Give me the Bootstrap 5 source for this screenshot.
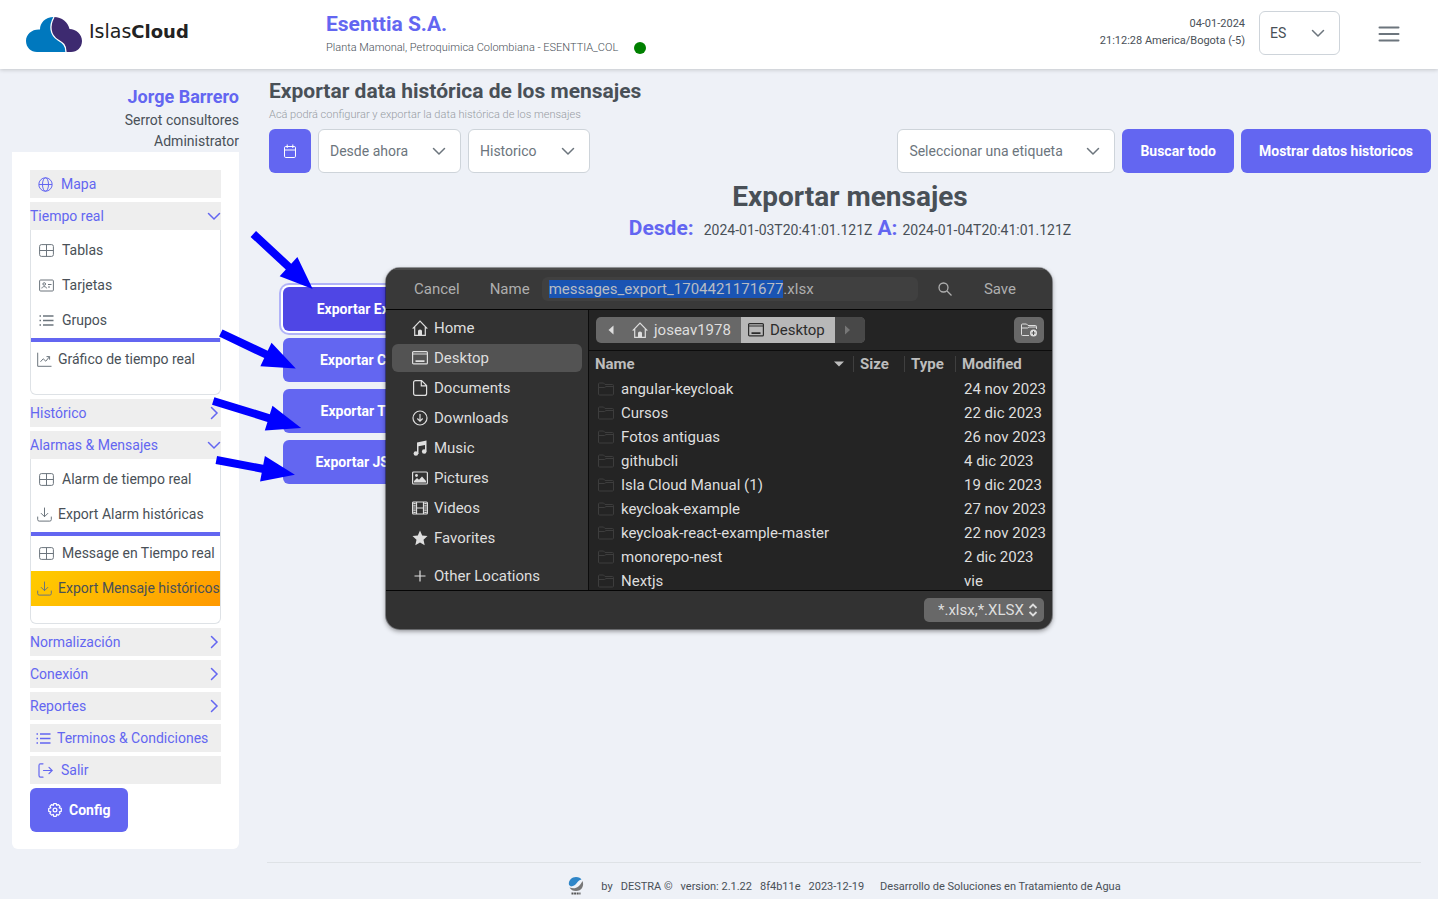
<!DOCTYPE html>
<html lang="es">
<head>
<meta charset="utf-8">
<meta name="viewport" content="width=device-width, initial-scale=1">
<title>IslasCloud - Exportar mensajes</title>
<link href="https://cdn.jsdelivr.net/npm/bootstrap@5.3.0/dist/css/bootstrap.min.css" rel="stylesheet">
<style>
:root{--accent:#6366f1;--ink:#495057;--soft:#6c757d}
body{font-family:Roboto,"Liberation Sans",sans-serif;font-size:14px;line-height:21px;color:var(--ink);background:#eef1f7;min-height:100vh}
svg{display:block;flex:none;fill:none;stroke:currentColor}
svg.solid{fill:currentColor;stroke:none}
a{color:inherit;text-decoration:none}
.accent{color:var(--accent)}
.topbar{min-height:69px;background:#fff;box-shadow:0 1px 4px rgba(0,0,0,.18);z-index:2;padding:0 38px 2px 24px}
.brand{width:302px;color:#222;font-family:"DejaVu Sans",sans-serif;font-size:19px;line-height:24px;gap:5px;margin-top:4px}
.brand strong{font-size:18px}
.burger{color:var(--soft);margin-left:38px}
.heading-md{font-size:21px;line-height:26px;font-weight:700}
.tiny{font-size:11px;line-height:17px}
.place{margin-top:2px}
.status-dot{width:12px;height:12px;background:green}
.btn{--bs-btn-font-size:14px;--bs-btn-line-height:21px;--bs-btn-border-radius:6px;--bs-btn-font-weight:700;--bs-btn-border-width:0;height:44px}
.btn-accent{--bs-btn-color:#fff;--bs-btn-bg:var(--accent);--bs-btn-hover-bg:#4f46e5;--bs-btn-hover-color:#fff;--bs-btn-padding-x:18px}
.btn-current{--bs-btn-bg:#4f46e5;box-shadow:0 0 0 2px #fff,0 0 0 4px #b1b3f8}
.btn-square{--bs-btn-padding-x:14px}
.form-select{height:44px;font-size:14px;line-height:21px;color:var(--soft);border-color:#ced4da;border-radius:6px;padding:10px 36px 10px 11px;background-color:#fff;background-position:right 14px center;background-size:14px 14px;--bs-form-select-bg-img:url("data:image/svg+xml,%3csvg xmlns='http://www.w3.org/2000/svg' viewBox='0 0 14 14'%3e%3cpath fill='none' stroke='%236c757d' stroke-width='1.5' stroke-linecap='round' stroke-linejoin='round' d='M1.5 4.5 7 10l5.500-5.500'/%3e%3c/svg%3e")}
.lang{width:81px;color:var(--ink);margin-left:14px;padding-left:10px}
.sel-time{width:143px}.sel-kind{width:122px}.sel-tag{width:218px}
.gap-7{gap:7px}
.side{width:239px;padding:16px 0 0 12px}
.side-panel{background:#fff;padding:18px 18px 17px;border-radius:0 0 6px 6px}
.user-name{font-size:18px;line-height:23px;font-weight:700;margin-bottom:2px}
.menu{gap:4px}
.menu-head{height:28px;background:#eee;color:var(--accent);border:0;padding:0;text-align:left}
.menu-icon{padding-left:8px;gap:8px}
.menu-tight{padding-left:6px;gap:6px}
.submenu{border:1px solid #dee2e6;border-top:0;border-radius:0 0 6px 6px;margin-top:-4px;padding:3px 0 17px}
.submenu a{height:35px;padding-left:8px;gap:8px;white-space:nowrap}
.submenu a.menu-tight{padding-left:6px;gap:6px}
.submenu svg{color:var(--soft)}
.submenu .current{background:linear-gradient(135deg,#fc0,#f90)}
.rule{height:4px;background:var(--accent)}
.content{padding:9px 7px 0 30px}
.subtitle{color:#979ca3;margin-top:2px}
.filters{margin-top:6px}
.big-title{font-size:28px;line-height:34px;font-weight:700;margin-top:7px}
.range{margin-top:1px}
.range-from{margin:0 5px 0 10px}
.range-to{margin-left:5px}
.exports{width:158px;margin:46px 0 0 14px;gap:7px}
.exports .btn{padding-left:0;padding-right:0}
.foot{border-top:1px solid #dee2e6;margin:0 10px 0 -2px;padding:14px 0 4px;gap:8px}
.arrows{position:absolute;left:0;top:0;z-index:6;pointer-events:none;color:#00f}
.dialog-layer{position:absolute;left:0;right:0;top:268px;z-index:5}
.file-dialog{width:666px;border-radius:14px;background:#323232;color:#dedede;font-size:15px;line-height:20px;box-shadow:0 0 0 1px rgba(0,0,0,.35),0 2px 5px rgba(0,0,0,.45);overflow:hidden}
.file-dialog button,.file-dialog .places a{color:inherit}
.fd-head{height:42px;background:#393939;border-top:2px solid #4c4c4c;border-bottom:1px solid #050505;color:#aeaeae;padding:0 36px 2px 28px}
.fd-plain{background:none;border:0;padding:0}
.fd-head label{margin:0 12px 0 30px}
.fd-name{width:376px;height:24px;border:0;border-radius:6px;background:#404040;color:#aeaeae;padding:0 7px;outline:0}
.fd-name::selection{background:#1a54b3;color:#b8bcc4}
.fd-search{margin:0 auto 0 20px}
.fd-body{height:281px;border-bottom:1px solid #050505;overflow:hidden}
.places{width:203px;border-right:1px solid #0c0c0c;padding:4px 6px;gap:2px}
.places a{flex:none;height:28px;padding-left:20px;gap:6px;border-radius:6px}
.places .current{background:#535353}
.files{background:#242424}
.pathbar{height:41px;border-bottom:1px solid #0c0c0c;padding:0 8px 0 7px}
.crumbs{height:26px;border-radius:5px;background:#686868;overflow:hidden}
.crumbs button{height:26px;border:0;background:none;padding:0 10px 0 7px;gap:6px}
.crumbs .back{padding:0 8px 0 9px}
.crumbs .here{background:#b8b8b8;color:#2c2c2c}
.crumbs .next{background:#484848;color:#777;width:30px}
.new-folder{width:30px;height:26px;border:0;border-radius:5px;background:#686868;padding:0 7px}
.file-table{table-layout:fixed;width:100%;border-collapse:collapse}
.file-table th{height:26px;padding:0;color:#bdbdbd}
.file-table th>div{padding:0 8px 0 6px;height:16px}
.file-table th+th>div{border-left:1px solid #3f3f3f}
.file-table td{height:24px;padding:0 0 0 9px;white-space:nowrap}
.file-table td svg{color:#3d3d3d}
.c-name{width:264px}.c-small{width:51px}
.fd-foot{height:38px;padding:0 8px 0 0}
.fd-filter{height:24px;width:120px;border:0;border-radius:5px;color:#dedede;font-size:15px;line-height:20px;padding:0 0 0 14px;background-color:#686868;background-position:right 4px center;background-size:14px 16px;--bs-form-select-bg-img:url("data:image/svg+xml,%3csvg xmlns='http://www.w3.org/2000/svg' viewBox='0 0 14 16'%3e%3cpath fill='none' stroke='%23dedede' stroke-width='1.800' d='M3.500 6 7 2.500 10.500 6M3.500 10 7 13.500l3.500-3.500'/%3e%3c/svg%3e")}
</style>
</head>
<body class="position-relative d-flex flex-column">
<svg width="0" height="0" class="position-absolute" aria-hidden="true">
  <symbol id="globe" viewBox="0 0 15 15"><circle cx="7.500" cy="7.500" r="6.700"/><ellipse cx="7.500" cy="7.500" rx="3" ry="6.700"/><path d="M1 7.500h13"/></symbol>
  <symbol id="grid" viewBox="0 0 15 15"><rect x=".6" y="1.600" width="13.800" height="11.800" rx="1.800"/><path d="M.6 7.500h13.800M7.500 1.600v11.800"/></symbol>
  <symbol id="idcard" viewBox="0 0 15 15"><rect x=".6" y="2" width="13.800" height="11" rx="1"/><circle cx="5.200" cy="6" r="1.300"/><path d="M2.800 10.400c.3-2.400 4.500-2.400 4.800 0M9 6.500h3.500M9 9h2"/></symbol>
  <symbol id="list" viewBox="0 0 15 15"><path d="M4 3h10.500M4 7.500h10.500M4 12h10.500M.5 3H2M.5 7.500H2M.5 12H2" stroke-width="1.300"/></symbol>
  <symbol id="chart" viewBox="0 0 15 15"><path d="M.7.700v13.600h13.800M3.500 9.800l2.700-3 2.600 2.400 3.700-4.500M9.500 4.600h3.100v3.100"/></symbol>
  <symbol id="download" viewBox="0 0 15 15"><path d="M7.500 1v8.500M4.200 6.400l3.300 3.300 3.300-3.300M.7 10v2.600q0 1.500 1.500 1.500h10.600q1.500 0 1.500-1.500V10" stroke-linecap="round"/></symbol>
  <symbol id="exit" viewBox="0 0 15 15"><path d="M5 .8H2.500Q1 .8 1 2.500v10Q1 14.200 2.500 14.200H5M5.500 7.500h8.700M11 4.300l3.200 3.200-3.200 3.200" stroke-width="1.200" stroke-linecap="round"/></symbol>
  <symbol id="down" viewBox="0 0 14 14"><path d="M1.500 4.500 7 10l5.500-5.500" stroke-width="1.500" stroke-linecap="round"/></symbol>
  <symbol id="right" viewBox="0 0 14 14"><path d="M4.500 1.500 10 7l-5.500 5.500" stroke-width="1.500" stroke-linecap="round"/></symbol>
  <symbol id="folder" viewBox="0 0 16 14"><path d="M.5 12V2q0-1 1-1h4l1.500 1.500h7.500q1 0 1 1V12q0 1-1 1h-13q-1 0-1-1zM.5 5.500h6L8 4.500h7.500"/></symbol>
  <symbol id="home" viewBox="0 0 16 16"><path d="M.7 8.700 8 1.200l7.300 7.500M2.700 7v8.300h10.600V7" stroke-width="1.200"/><path d="M6 15.500V11q0-1.500 2-1.500t2 1.500v4.500z" fill="currentColor" stroke="none"/></symbol>
  <symbol id="desktop" viewBox="0 0 16 16"><rect x=".6" y="1.600" width="14.800" height="12.300" rx="1" stroke-width="1.200"/><path d="M1 4h14" /><path d="M3.500 11.200h9" stroke-width="1.800"/></symbol>
</svg>

<header class="topbar d-flex align-items-center position-relative">
  <div class="d-flex align-items-start w-100">
    <a href="#" class="brand d-flex align-items-start">
      <svg class="solid" width="60" height="38" viewBox="0 0 60 38"><path d="M30 2C21 2 16 8 16 14.500 8 14 2 19 2 26c0 6.500 5 11 11 11h29c0-7-3-9-8-12-8-5-9-14-4-23z" fill="#0078be"/><path d="M30 2c8 0 14 5 15.500 12C52 14 58 19 58 26c0 6.500-5 11-11 11h-5c0-7-3-9-8-12-8-5-9-14-4-23z" fill="#3d2a70"/><path d="M30 2c-5 9-4 18 4 23 5 3 8 5 8 12" fill="none" stroke="#fff" stroke-width="1.300"/></svg>
      <span class="mt-1">Islas<strong>Cloud</strong></span>
    </a>
    <div class="flex-grow-1">
      <div class="heading-md accent">Esenttia S.A.</div>
      <div class="place d-flex align-items-center tiny fw-light">Planta Mamonal, Petroquimica Colombiana - ESENTTIA_COL<span class="status-dot rounded-circle ms-3"></span></div>
    </div>
    <div class="tiny text-end mt-1">04-01-2024<br>21:12:28 America/Bogota (-5)</div>
    <select class="form-select lang" aria-label="Idioma"><option>ES</option></select>
    <button class="fd-plain burger" type="button" aria-label="Menú"><svg width="22" height="44" viewBox="0 0 22 44" stroke-width="2" stroke-linecap="round"><path d="M1.500 16.500h19M1.500 23h19M1.500 29.500h19"/></svg></button>
  </div>
</header>

<div class="d-flex flex-grow-1">
  <aside class="side flex-shrink-0">
    <div class="text-end">
      <div class="user-name accent">Jorge Barrero</div>
      <div>Serrot consultores</div>
      <div>Administrator</div>
    </div>
    <div class="side-panel">
      <nav class="menu d-flex flex-column">
        <a href="#" class="menu-head menu-icon d-flex align-items-center"><svg width="15" height="15"><use href="#globe"/></svg>Mapa</a>
        <button class="menu-head d-flex align-items-center justify-content-between" type="button">Tiempo real<svg width="14" height="14"><use href="#down"/></svg></button>
        <div class="submenu">
          <a href="#" class="d-flex align-items-center"><svg width="15" height="15"><use href="#grid"/></svg>Tablas</a>
          <a href="#" class="d-flex align-items-center"><svg width="15" height="15"><use href="#idcard"/></svg>Tarjetas</a>
          <a href="#" class="d-flex align-items-center"><svg width="15" height="15"><use href="#list"/></svg>Grupos</a>
          <div class="rule"></div>
          <a href="#" class="menu-tight d-flex align-items-center"><svg width="15" height="15"><use href="#chart"/></svg>Gráfico de tiempo real</a>
        </div>
        <button class="menu-head d-flex align-items-center justify-content-between" type="button">Histórico<svg width="14" height="14"><use href="#right"/></svg></button>
        <button class="menu-head d-flex align-items-center justify-content-between" type="button">Alarmas &amp; Mensajes<svg width="14" height="14"><use href="#down"/></svg></button>
        <div class="submenu">
          <a href="#" class="d-flex align-items-center"><svg width="15" height="15"><use href="#grid"/></svg>Alarm de tiempo real</a>
          <a href="#" class="menu-tight d-flex align-items-center"><svg width="15" height="15"><use href="#download"/></svg>Export Alarm históricas</a>
          <div class="rule"></div>
          <a href="#" class="d-flex align-items-center"><svg width="15" height="15"><use href="#grid"/></svg>Message en Tiempo real</a>
          <a href="#" class="menu-tight current d-flex align-items-center"><svg width="15" height="15"><use href="#download"/></svg>Export Mensaje históricos</a>
        </div>
        <button class="menu-head d-flex align-items-center justify-content-between" type="button">Normalización<svg width="14" height="14"><use href="#right"/></svg></button>
        <button class="menu-head d-flex align-items-center justify-content-between" type="button">Conexión<svg width="14" height="14"><use href="#right"/></svg></button>
        <button class="menu-head d-flex align-items-center justify-content-between" type="button">Reportes<svg width="14" height="14"><use href="#right"/></svg></button>
        <a href="#" class="menu-head menu-tight d-flex align-items-center"><svg width="15" height="15"><use href="#list"/></svg>Terminos &amp; Condiciones</a>
        <a href="#" class="menu-head menu-icon d-flex align-items-center"><svg width="15" height="15"><use href="#exit"/></svg>Salir</a>
        <button class="btn btn-accent d-flex align-items-center align-self-start gap-7" type="button"><svg width="14" height="14" viewBox="0 0 14 14" stroke-width="1.200" stroke-linejoin="round"><circle cx="7" cy="7" r="1.900"/><path d="M5.700.7h2.600l.4 1.700 1.500-.9 1.900 1.900-.9 1.400 2.100.6v2.900l-2 .5.800 1.600-1.900 1.800-1.500-.9-.5 2H5.700l-.4-2-1.600.9-1.800-1.800.9-1.600-2.100-.5V5.500l2.100-.6-.9-1.500 1.800-1.900 1.600.9z"/></svg>Config</button>
      </nav>
    </div>
  </aside>

  <main class="content flex-grow-1 d-flex flex-column">
    <h1 class="heading-md mb-0">Exportar data histórica de los mensajes</h1>
    <div class="tiny fw-light subtitle">Acá podrá configurar y exportar la data histórica de los mensajes</div>
    <div class="filters d-flex gap-7">
      <button class="btn btn-accent btn-square" type="button" aria-label="Calendario"><svg width="14" height="14" viewBox="0 0 14 14"><rect x="1.500" y="2.500" width="11" height="11" rx="1.300"/><path d="M1.500 6h11M4.200.5v3.500M9.800.5v3.500"/></svg></button>
      <select class="form-select sel-time" aria-label="Desde"><option>Desde ahora</option></select>
      <select class="form-select sel-kind" aria-label="Tipo de datos"><option>Historico</option></select>
      <select class="form-select sel-tag ms-auto" aria-label="Etiqueta"><option>Seleccionar una etiqueta</option></select>
      <button class="btn btn-accent" type="button">Buscar todo</button>
      <button class="btn btn-accent" type="button">Mostrar datos historicos</button>
    </div>
    <h2 class="big-title text-center mb-0">Exportar mensajes</h2>
    <div class="range d-flex justify-content-center align-items-baseline">
      <span class="heading-md accent">Desde:</span><span class="range-from">2024-01-03T20:41:01.121Z</span>
      <span class="heading-md accent">A:</span><span class="range-to">2024-01-04T20:41:01.121Z</span>
    </div>
    <div class="exports d-flex flex-column">
      <button class="btn btn-accent btn-current" type="button">Exportar Excel</button>
      <button class="btn btn-accent" type="button">Exportar CSV</button>
      <button class="btn btn-accent" type="button">Exportar TXT</button>
      <button class="btn btn-accent" type="button">Exportar JSON</button>
    </div>
    <footer class="foot tiny mt-auto d-flex justify-content-center align-items-center">
      <svg class="solid me-2" width="18" height="18" viewBox="0 0 18 18"><path d="M15.500 4c2 5-1 10-6.500 10-3 0-5-1-6.500-3.500 6 2 9.500 0 13-6.500z" fill="#777"/><path d="M2 8C1 3.500 5 0 9 0c3 0 4.500 1 5.500 2.500C10 3 10 9 4 9.500z" fill="#2f86c8"/><path d="M4.500 16.500h9" stroke="#555" stroke-width="2" stroke-dasharray="2 .6"/></svg>
      <span>by</span><span>DESTRA ©</span><span>version: 2.1.22</span><span>8f4b11e</span><span>2023-12-19</span><span class="ms-2">Desarrollo de Soluciones en Tratamiento de Agua</span>
    </footer>
  </main>
</div>

<div class="dialog-layer d-flex justify-content-center">
  <section class="file-dialog" role="dialog" aria-label="Guardar archivo">
    <div class="fd-head d-flex align-items-center">
      <button class="fd-plain" type="button">Cancel</button>
      <label for="fname">Name</label>
      <input id="fname" class="fd-name" type="text" value="messages_export_1704421171677.xlsx">
      <button class="fd-plain fd-search" type="button" aria-label="Buscar"><svg width="14" height="14" viewBox="0 0 14 14" stroke-width="1.300"><circle cx="5.500" cy="5.500" r="4.500"/><path d="m9 9 4.500 4.500"/></svg></button>
      <button class="fd-plain" type="button">Save</button>
    </div>
    <div class="fd-body d-flex">
      <nav class="places d-flex flex-column flex-shrink-0">
        <a href="#" class="d-flex align-items-center"><svg width="16" height="16"><use href="#home"/></svg>Home</a>
        <a href="#" class="current d-flex align-items-center"><svg width="16" height="16"><use href="#desktop"/></svg>Desktop</a>
        <a href="#" class="d-flex align-items-center"><svg width="16" height="16" viewBox="0 0 16 16" stroke-width="1.200"><path d="M1.600 2.600Q1.600.6 3.600.6h6l5 5v7.800q0 2-2 2h-9q-2 0-2-2zM9.300.8v5.100h5.200"/></svg>Documents</a>
        <a href="#" class="d-flex align-items-center"><svg width="16" height="16" viewBox="0 0 16 16" stroke-width="1.200"><circle cx="8" cy="8" r="7"/><path d="M8 4v7M5.300 8.500 8 11.200l2.700-2.700"/></svg>Downloads</a>
        <a href="#" class="d-flex align-items-center"><svg class="solid" width="16" height="16" viewBox="0 0 16 16"><path d="M5 2.500 14.500.5v11h-1.500V5L6.500 6.300V14H5z"/><circle cx="3.900" cy="13.500" r="2.300"/><circle cx="12.200" cy="11.500" r="2.300"/></svg>Music</a>
        <a href="#" class="d-flex align-items-center"><svg width="16" height="16" viewBox="0 0 16 16" stroke-width="1.200"><rect x=".6" y="2" width="14.800" height="12" rx="1"/><path d="M2 12.500V11l3-3 2 1.700 3-3.200 4 4.500v1.500z" fill="currentColor" stroke="none"/><circle cx="4.500" cy="5.500" r="1.400" fill="currentColor" stroke="none"/></svg>Pictures</a>
        <a href="#" class="d-flex align-items-center"><svg width="16" height="16" viewBox="0 0 16 16" stroke-width="1.200"><rect x=".6" y="2" width="14.800" height="12" rx="1"/><path d="M4.500 2v12M11.500 2v12M4.500 8h7"/><path d="M2.500 3v10M13.500 3v10" stroke-width="2.400" stroke-dasharray="1.200 1"/></svg>Videos</a>
        <a href="#" class="d-flex align-items-center"><svg class="solid" width="16" height="16" viewBox="0 0 16 16"><path d="m8 .5 2.200 5 5.300.6-4 3.700 1.200 5.500L8 12.500l-4.700 2.800 1.200-5.500-4-3.700 5.300-.6z"/></svg>Favorites</a>
        <a href="#" class="d-flex align-items-center mt-2"><svg width="16" height="16" viewBox="0 0 16 16" stroke-width="1.200"><path d="M2.500 8h11M8 2.500v11"/></svg>Other Locations</a>
      </nav>
      <div class="files flex-grow-1">
        <div class="pathbar d-flex align-items-center justify-content-between">
          <div class="crumbs d-flex">
            <button class="back" type="button" aria-label="Atrás"><svg class="solid" width="12" height="12" viewBox="0 0 12 12"><path d="M8.500 1.500v9L3.500 6z"/></svg></button>
            <button class="d-flex align-items-center" type="button"><svg width="16" height="16"><use href="#home"/></svg>joseav1978</button>
            <button class="here d-flex align-items-center" type="button"><svg width="16" height="16"><use href="#desktop"/></svg>Desktop</button>
            <button class="next" type="button" aria-label="Adelante"><svg class="solid" width="10" height="12" viewBox="0 0 10 12"><path d="M3 1.500v9L8 6z"/></svg></button>
          </div>
          <button class="new-folder" type="button" aria-label="Nueva carpeta"><svg width="16" height="14" viewBox="0 0 16 14"><path d="M8 12.500H1.500q-1 0-1-1V2q0-1 1-1h4L7 2.500h7.500q1 0 1 1V6M.5 5h6L8 4h7.500" /><circle cx="12.500" cy="10" r="3.500" fill="currentColor" stroke="none"/><path d="M10.500 10h4M12.500 8v4" stroke="#555"/></svg></button>
        </div>
        <table class="file-table">
          <colgroup><col class="c-name"><col class="c-small"><col class="c-small"><col></colgroup>
          <thead><tr>
            <th scope="col"><div class="d-flex align-items-center justify-content-between">Name<svg class="solid" width="12" height="6" viewBox="0 0 12 6"><path d="M1 .5h10L6 5.500z"/></svg></div></th>
            <th scope="col"><div class="d-flex align-items-center">Size</div></th>
            <th scope="col"><div class="d-flex align-items-center">Type</div></th>
            <th scope="col"><div class="d-flex align-items-center">Modified</div></th>
          </tr></thead>
          <tbody>
            <tr><td><div class="d-flex align-items-center gap-7"><svg width="16" height="14"><use href="#folder"/></svg>angular-keycloak</div></td><td></td><td></td><td>24 nov 2023</td></tr>
            <tr><td><div class="d-flex align-items-center gap-7"><svg width="16" height="14"><use href="#folder"/></svg>Cursos</div></td><td></td><td></td><td>22 dic 2023</td></tr>
            <tr><td><div class="d-flex align-items-center gap-7"><svg width="16" height="14"><use href="#folder"/></svg>Fotos antiguas</div></td><td></td><td></td><td>26 nov 2023</td></tr>
            <tr><td><div class="d-flex align-items-center gap-7"><svg width="16" height="14"><use href="#folder"/></svg>githubcli</div></td><td></td><td></td><td>4 dic 2023</td></tr>
            <tr><td><div class="d-flex align-items-center gap-7"><svg width="16" height="14"><use href="#folder"/></svg>Isla Cloud Manual (1)</div></td><td></td><td></td><td>19 dic 2023</td></tr>
            <tr><td><div class="d-flex align-items-center gap-7"><svg width="16" height="14"><use href="#folder"/></svg>keycloak-example</div></td><td></td><td></td><td>27 nov 2023</td></tr>
            <tr><td><div class="d-flex align-items-center gap-7"><svg width="16" height="14"><use href="#folder"/></svg>keycloak-react-example-master</div></td><td></td><td></td><td>22 nov 2023</td></tr>
            <tr><td><div class="d-flex align-items-center gap-7"><svg width="16" height="14"><use href="#folder"/></svg>monorepo-nest</div></td><td></td><td></td><td>2 dic 2023</td></tr>
            <tr><td><div class="d-flex align-items-center gap-7"><svg width="16" height="14"><use href="#folder"/></svg>Nextjs</div></td><td></td><td></td><td>vie</td></tr>
          </tbody>
        </table>
      </div>
    </div>
    <div class="fd-foot d-flex align-items-center justify-content-end">
      <select class="form-select fd-filter" aria-label="Filtro de archivos"><option>*.xlsx,*.XLSX</option></select>
    </div>
  </section>
</div>

<svg class="arrows solid" width="320" height="490" viewBox="0 0 320 490" aria-hidden="true">
  <path transform="translate(253.300 234) rotate(42.800)" d="M0-4h48v-9l33 13-33 13V4H0z"/>
  <path transform="translate(220.800 333) rotate(25.400)" d="M0-4h50v-9l33 13-33 13V4H0z"/>
  <path transform="translate(213.200 401) rotate(17.100)" d="M0-4h58v-9l34 13-34 13V4H0z"/>
  <path transform="translate(216.300 460) rotate(10.700)" d="M0-4h47v-9l33 13-33 13V4H0z"/>
</svg>
<script src="https://cdn.jsdelivr.net/npm/bootstrap@5.3.0/dist/js/bootstrap.bundle.min.js"></script>
<script>
// The base name starts selected, so that typing keeps the extension.
const nameBox = document.getElementById('fname');
nameBox.focus({preventScroll: true});
nameBox.setSelectionRange(0, nameBox.value.lastIndexOf('.'));
</script>
</body>
</html>
